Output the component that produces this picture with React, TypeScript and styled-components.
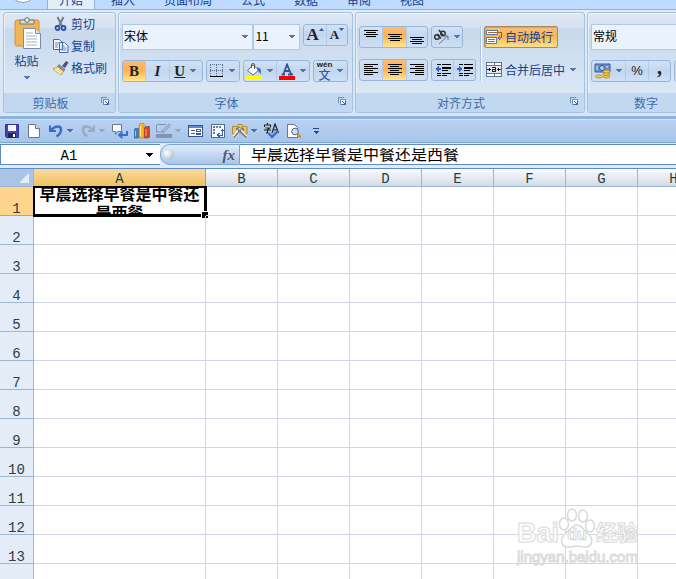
import React from "react";
import styled, { createGlobalStyle, css } from "styled-components";

const uiFont = `"Noto Sans CJK SC", sans-serif`;
const gridFont = `"Liberation Mono", "Noto Sans CJK SC", monospace`;

const Global = createGlobalStyle`
  * { box-sizing: border-box; }
  body { margin: 0; overflow: hidden; background: #fff; font-family: ${uiFont}; font-size: 12px; }
  button, input, select { font: inherit; color: inherit; }
  svg { display: block; flex: none; }
`;

const Page = styled.div`
  display: flex;
  flex-direction: column;
  height: 100vh;
  overflow: hidden;
`;

/* ---------- tabs ---------- */

const TabStrip = styled.nav`
  display: flex;
  align-items: flex-end;
  gap: 19px;
  flex: none;
  height: 10px;
  padding-left: 9px;
  overflow: hidden;
  background: #bfdbff;
  border-bottom: 1px solid #8db2e3;
`;

const OfficeButton = styled.button`
  flex: none;
  width: 28px;
  height: 28px;
  margin: 0 -8px 6px 0;
  padding: 0;
  border: 1px solid #8f9db3;
  border-radius: 50%;
  background: linear-gradient(#dfe6f0, #fff);
`;

const Tab = styled.button<{ $active?: boolean }>`
  flex: none;
  height: 18px;
  padding: 0 5px;
  border: 0;
  background: none;
  color: #15428b;
  line-height: 18px;
  white-space: nowrap;
  ${(p) =>
    p.$active &&
    css`
      padding: 0 11px;
      margin-right: -7px;
      background: #e3eefb;
      box-shadow: -1px 0 #8db2e3, 1px 0 #8db2e3;
    `}
`;

/* ---------- ribbon ---------- */

const Ribbon = styled.section`
  display: flex;
  gap: 2px;
  flex: none;
  height: 106px;
  padding: 2px 3px;
  overflow: hidden;
  background: linear-gradient(#e1ecf8, #d6e6f7);
  border-bottom: 1px solid #c0f4ff;
`;

const Group = styled.section<{ $width: number }>`
  display: flex;
  flex-direction: column;
  flex: none;
  width: ${(p) => p.$width}px;
  border: 1px solid #a4c2e2;
  border-radius: 3px;
  overflow: hidden;
  background: linear-gradient(#dee8f4 0, #d6e2f1 15px, #c8d9ed 16px, #dae7f5 80px);
  box-shadow: inset 1px 1px rgba(255, 255, 255, 0.5);
`;

const GroupBody = styled.div`
  display: flex;
  flex: 1;
  flex-direction: column;
  gap: 10px;
  padding: 11px 4px 0 3px;
`;

const GroupFooter = styled.footer`
  display: flex;
  align-items: center;
  height: 19px;
  background: #c1d8f0;
  color: #3e6aaa;
`;

const GroupTitle = styled.span`
  flex: 1;
  text-align: center;
  line-height: 18px;
`;

const Launcher = styled.button`
  width: 18px;
  height: 18px;
  padding: 2px 5px 6px 3px;
  border: 0;
  background: none;
`;

const Row = styled.div`
  display: flex;
  align-items: flex-start;
  gap: 3px;
`;

const ClipboardBody = styled.div`
  display: flex;
  flex: 1;
  gap: 8px;
  padding: 0 0 0 8px;
`;

const PasteButton = styled.button`
  display: flex;
  flex-direction: column;
  align-items: center;
  justify-content: flex-start;
  width: 31px;
  padding: 4px 0 0;
  border: 0;
  background: none;
  color: #15428b;
  line-height: 18px;
  svg + span { margin: 3px 0 5px -2px; }
  span + svg { margin-left: -2px; }
`;

const CommandList = styled.div`
  display: flex;
  flex-direction: column;
`;

const Command = styled.button<{ $pressed?: boolean }>`
  display: flex;
  align-items: center;
  gap: 2px;
  height: 22px;
  padding: 0 2px 0 1px;
  border: 1px solid transparent;
  border-radius: 2px;
  background: none;
  color: #15428b;
  line-height: 18px;
  white-space: nowrap;
  span + svg { margin-left: 2px; }
  ${(p) =>
    p.$pressed &&
    css`
      padding-right: 4px;
      border-color: #a58b5e;
      background: linear-gradient(#f3be82, #fcb453 45%, #ffdf86);
      box-shadow: inset 1px 1px #c9a673;
    `}
`;

const ButtonSet = styled.div`
  display: flex;
  height: 22px;
  border: 1px solid #98b6dc;
  border-radius: 3px;
  overflow: hidden;
  background: linear-gradient(#d3e2f4, #c2d6f0 50%, #cfe0f5);
`;

const Tool = styled.button<{ $width: number; $pressed?: boolean }>`
  display: flex;
  align-items: center;
  justify-content: center;
  gap: 4px;
  width: ${(p) => p.$width}px;
  padding: 0;
  border: 0;
  background: ${(p) => (p.$pressed ? "linear-gradient(#f8bd7c, #ffb04a 45%, #ffe78f)" : "none")};
  color: #222;
  & + & { border-left: 1px solid #b4cbe8; }
`;

const Glyph = styled.span<{ $size: number; $italic?: boolean; $underline?: boolean; $sans?: boolean; $raised?: boolean }>`
  padding-bottom: ${(p) => (p.$raised ? 8 : 0)}px;
  font-family: ${(p) => (p.$sans ? `"Liberation Sans", sans-serif` : `"Liberation Serif", serif`)};
  font-size: ${(p) => p.$size}px;
  font-weight: ${(p) => (p.$sans ? 400 : 700)};
  font-style: ${(p) => (p.$italic ? "italic" : "normal")};
  text-decoration: ${(p) => (p.$underline ? "underline" : "none")};
  line-height: 20px;
`;

const Combo = styled.label<{ $width: number }>`
  display: flex;
  align-items: center;
  width: ${(p) => p.$width}px;
  height: 26px;
  padding-right: 3px;
  border: 1px solid #b1c9e8;
  background: #eaf2fb;
  & + & { margin-left: -3px; }
`;

const ComboSelect = styled.select`
  appearance: none;
  flex: 1;
  min-width: 0;
  height: 24px;
  padding: 0 1px 3px;
  border: 0;
  background: none;
  color: #000;
  outline: 0;
`;

const AlignBody = styled.div`
  display: flex;
  flex: 1;
  padding: 13px 0 0 3px;
`;

const Stack = styled.div`
  display: flex;
  flex-direction: column;
  align-items: flex-start;
  gap: 11px;
`;

const Separator = styled.div`
  width: 2px;
  height: 55px;
  margin: 0 2px 0 4px;
  background: #fff;
  border-left: 1px solid #a9c4e3;
`;

/* ---------- quick access toolbar ---------- */

const QuickBar = styled.div`
  display: flex;
  align-items: center;
  gap: 6px;
  flex: none;
  height: 27px;
  padding-left: 4px;
  background: linear-gradient(#b8d2f1, #a7c5ea);
  border-top: 3px solid #8fb3dd;
  border-bottom: 1px solid #7ea3cf;
  box-shadow: inset 0 1px #d4e4f8;
`;

const QuickButton = styled.button`
  display: flex;
  align-items: center;
  gap: 2px;
  padding: 0;
  border: 0;
  background: none;
`;

/* ---------- formula bar ---------- */

const FormulaBar = styled.div`
  display: flex;
  flex: none;
  height: 26px;
  background: #e1ebf8;
  border-top: 1px solid #d8e6f7;
  border-bottom: 1px solid #5f8cc0;
  padding-bottom: 3px;
`;

const NameBox = styled.div`
  display: flex;
  flex: none;
  align-items: center;
  width: 160px;
  border: 1px solid #5f8cc0;
  border-right: 0;
  background: #fff;
`;

const NameInput = styled.input`
  flex: 1;
  min-width: 0;
  height: 19px;
  padding: 2px 4px 0 0;
  border: 0;
  outline: 0;
  background: none;
  text-align: center;
  font: 14px ${gridFont};
`;

const PlainButton = styled.button`
  display: flex;
  padding: 0 6px 0 3px;
  border: 0;
  background: none;
`;

const FunctionArea = styled.div`
  display: flex;
  flex: none;
  align-items: center;
  justify-content: space-between;
  width: 80px;
  padding: 0 4px 0 2px;
  border: 1px solid #7ea3cf;
  border-radius: 10px 0 0 10px;
  background: linear-gradient(#e1ecfa, #a9c5e9);
`;

const Knob = styled.span`
  width: 11px;
  height: 11px;
  border-radius: 50%;
  background: radial-gradient(circle at 35% 35%, #fff, #9eadc1);
`;

const FxButton = styled.button`
  padding: 0;
  border: 0;
  background: none;
  color: #4b5a70;
  font: italic 700 15px/18px "Liberation Serif", serif;
`;

const FormulaInput = styled.input`
  flex: 1;
  min-width: 0;
  padding: 3px 11px 0;
  border: solid #5f8cc0;
  border-width: 1px 0;
  outline: 0;
  background: #fff;
  color: #000;
  font: 16px/17px ${gridFont};
`;

/* ---------- sheet ---------- */

const Sheet = styled.main`
  position: relative;
  flex: 1;
  min-height: 0;
  overflow: hidden;
  background: #fff;
`;

const Grid = styled.table`
  table-layout: fixed;
  width: 710px;
  border-collapse: separate;
  border-spacing: 0;
  font-family: ${gridFont};
  font-size: 14px;
  color: #27413e;
`;

const Col = styled.col<{ $width: number }>`
  width: ${(p) => p.$width}px;
`;

const Corner = styled.th`
  height: 18px;
  padding: 0 4px 0 0;
  border: solid #9eb6ce;
  border-width: 0 1px 1px 0;
  background: #a9c4e9;
  svg { margin-left: auto; }
`;

const ColHead = styled.th<{ $selected: boolean }>`
  height: 18px;
  padding: 4px 0 0;
  border: solid ${(p) => (p.$selected ? "#e0913a" : "#9eb6ce")};
  border-width: 0 1px 1px 0;
  background: ${(p) => (p.$selected ? "linear-gradient(#f9d99f, #f1c15f)" : "linear-gradient(#f9fbfd, #d3dbe9)")};
  font-weight: 400;
  line-height: 13px;
`;

const RowHead = styled.th<{ $selected: boolean }>`
  height: 29px;
  padding: 0;
  border: solid ${(p) => (p.$selected ? "#f29536" : "#9eb6ce")};
  border-width: 0 1px 1px 0;
  background: ${(p) => (p.$selected ? "#ffd58d" : "#e4ecf7")};
  font-weight: 400;
  line-height: 12px;
  vertical-align: bottom;
`;

const Cell = styled.td`
  position: relative;
  height: 29px;
  padding: 0;
  border: solid #d0d7e5;
  border-width: 0 1px 1px 0;
`;

const CellText = styled.div`
  height: 28px;
  overflow: hidden;
  color: #000;
  font-size: 16px;
  font-weight: 700;
  line-height: 19px;
  text-align: center;
`;

const Selection = styled.div`
  position: absolute;
  inset: -1px -2px -2px -1px;
  border: 2px solid #000;
  border-right-width: 3px;
  border-bottom-width: 3px;
  &::after {
    content: "";
    position: absolute;
    right: -4px;
    bottom: -4px;
    width: 6px;
    height: 6px;
    background: #000;
    border: solid #fff;
    border-width: 1px 0 0 1px;
  }
`;

const Watermark = styled.div`
  position: absolute;
  right: 38px;
  bottom: 14px;
  display: flex;
  flex-direction: column;
  color: #fff;
  font-family: "Liberation Sans", "Noto Sans CJK SC", sans-serif;
  font-weight: 700;
  -webkit-text-stroke: 1px #d9d9d9;
`;

const WatermarkBrand = styled.div`
  display: flex;
  align-items: flex-end;
  height: 42px;
  font-size: 27px;
  line-height: 30px;
`;

const Paw = styled.span`
  display: grid;
  place-items: end center;
  > * { grid-area: 1 / 1; }
  > span { font-size: 16px; line-height: 22px; padding-bottom: 2px; }
`;

const WatermarkCjk = styled.span`
  margin-left: 1px;
  font-size: 21px;
`;

const WatermarkUrl = styled.div`
  font-size: 15px;
  font-weight: 400;
  line-height: 17px;
`;

/* ---------- icons ---------- */

const Arrow = ({ c = "#5375a8", w = 8 }: { c?: string; w?: number }) => (
  <svg width={w} height="6" viewBox={`0 0 ${w} 6`} shapeRendering="crispEdges">
    <path d={`M${w / 2 - (w > 8 ? 4 : 3)} 1h${w > 8 ? 8 : 6}L${w / 2} 5z`} fill={c} />
  </svg>
);

const LauncherIcon = () => (
  <svg width="10" height="10" viewBox="0 0 10 10" fill="none" shapeRendering="crispEdges">
    <path d="M1.5 7V1.5H7M3.5 3.5h5v5h-5z" stroke="#6d93c3" />
    <path d="M4 4h4v4H4z" fill="#eef5fd" />
    <path d="M5 5l3 3M8 5v3H5" stroke="#41669c" />
  </svg>
);

const PasteIcon = () => (
  <svg width="28" height="32" viewBox="0 0 28 32">
    <rect x="1" y="3" width="24" height="26" rx="2" fill="#efb657" stroke="#ce9141" />
    <path d="M6 3h14v4H6z" fill="#d7dce2" stroke="#777" />
    <circle cx="13" cy="3" r="2.3" fill="#eee" stroke="#666" />
    <path d="M9.500 11.500h12l5 5v15h-17z" fill="#fff" stroke="#7b8ca8" />
    <path d="M21.500 11.500v5h5" fill="#dbe6f4" stroke="#7b8ca8" />
    <path d="M12 16h7M12 19h11M12 22h11M12 25h11M12 28h11" stroke="#a8b0bd" />
  </svg>
);

const CutIcon = () => (
  <svg width="16" height="16" viewBox="0 0 16 16" fill="none">
    <path d="M4.500 1l4.500 9M10.500 1L6 10" stroke="#6f7d93" strokeWidth="2" />
    <circle cx="4.500" cy="12" r="2" stroke="#2452a6" strokeWidth="1.800" />
    <circle cx="10.500" cy="12" r="2" stroke="#2452a6" strokeWidth="1.800" />
  </svg>
);

const CopyIcon = () => (
  <svg width="16" height="16" viewBox="0 0 16 16">
    <path d="M.5 1.500h6l3 3v7h-9zM6.500 4.500h5l3.500 3.500v6.500H6.500z" fill="#f6faff" stroke="#3f68ad" />
    <path d="M2 5h4M2 7h3M2 9h3M8.500 8h3M8.500 10h5M8.500 12h5" stroke="#5b86c9" />
  </svg>
);

const BrushIcon = () => (
  <svg width="16" height="16" viewBox="0 0 16 16">
    <path d="M9 6l4-5 2.500 1.500L12 8z" fill="#4d5088" />
    <path d="M6 4.500l6 5-1.500 2-6-5z" fill="#8d8fa5" stroke="#55597c" strokeWidth=".6" />
    <path d="M4.500 6.500l6 5L8 15 0 9z" fill="#f3dc7f" stroke="#a98d3c" strokeWidth=".7" />
    <path d="M2 9.500l5 4M4 8.500l5 4" stroke="#fff6c9" />
  </svg>
);

const BordersIcon = () => (
  <svg width="14" height="14" viewBox="0 0 14 14" shapeRendering="crispEdges">
    <path d="M.5 1v11M6.500 1v11M12.500 1v11M0 .5h13M0 6.500h13" stroke="#5a6c87" strokeDasharray="1 1" />
    <path d="M0 12.500h13" stroke="#000" />
  </svg>
);

const FillIcon = () => (
  <svg width="16" height="17" viewBox="0 0 16 17">
    <path d="M7 2l6 5-6 5-5.500-4.500z" fill="#fff" stroke="#4b6796" />
    <path d="M5.500 5V2a1.500 1.500 0 013 0v4" fill="none" stroke="#555" />
    <path d="M11 4.500c4 0 4.500 3 3.500 7-1-2-1.500-3.500-3-4z" fill="#3567b8" />
    <path d="M0 13h16v4H0z" fill="#ff0" />
  </svg>
);

const FontColorIcon = () => (
  <svg width="16" height="17" viewBox="0 0 16 17">
    <path d="M2.500 11.500H6M9 11.500h5M4.500 11L8 1.500 12 11M6 8h5" fill="none" stroke="#2f5597" strokeWidth="1.800" />
    <path d="M0 13h16v4H0z" fill="red" />
  </svg>
);

const Phonetic = styled.span`
  display: flex;
  flex-direction: column;
  align-items: center;
  font: 700 8px/8px "Liberation Sans", sans-serif;
  b { color: #2f5da8; font: 500 12px/12px ${uiFont}; }
`;

const LinesIcon = ({ rows }: { rows: [number, number, number][] }) => (
  <svg width="14" height="16" viewBox="0 0 14 16" shapeRendering="crispEdges">
    {rows.map(([x, y, w]) => (
      <path key={y} d={`M${x} ${y}.5h${w}`} stroke="#000" />
    ))}
  </svg>
);

const vAlign = (top: number): [number, number, number][] => [
  [0, top, 14],
  [2, top + 2, 10],
  [0, top + 4, 14],
  [2, top + 6, 10],
];
const hAlign = (shift: number): [number, number, number][] =>
  [2, 4, 6, 8, 10, 12].map((y, i) => (i % 2 ? [shift, y, 9] : [0, y, 14]));

const OrientIcon = () => (
  <svg width="16" height="16" viewBox="0 0 16 16" fill="none" stroke="#333">
    <circle cx="4" cy="8" r="2.300" strokeWidth="1.500" />
    <path d="M4 5l4 4.500M6 1l4.500 6" strokeWidth="1.500" />
    <circle cx="10" cy="4.500" r="2.200" strokeWidth="1.500" />
    <path d="M6 15L14.500 7M11 7h4v4" stroke="#61748f" />
  </svg>
);

const IndentIcon = ({ right }: { right?: boolean }) => (
  <svg width="16" height="14" viewBox="0 0 16 14" shapeRendering="crispEdges">
    <path d="M2 1.500h4M7 1.500h9M7 7.500h6M2 10.500h4M7 10.500h9M2 12.500h4M7 12.500h5" stroke="#000" />
    <path d="M7 5h9" stroke="#000" strokeWidth="2" />
    <path d={right ? "M0 5h2V3l4 3-4 3V7H0z" : "M6 5H4V3L0 6l4 3V7h2z"} fill="#2d66c4" />
  </svg>
);

const WrapIcon = () => (
  <svg width="17" height="16" viewBox="0 0 17 16">
    <path d="M.5 1.500h11v4H.5zM.5 8.500h10v6H.5z" fill="#fff" stroke="#56759f" />
    <path d="M2 3.500h13M2 10.500h7M2 12.500h7" stroke="#9a6b3d" />
    <path d="M15.500 3v6h-3M14 7l-2 2 2 2" fill="none" stroke="#3a67a8" />
  </svg>
);

const MergeIcon = () => (
  <svg width="17" height="16" viewBox="0 0 17 16" shapeRendering="crispEdges">
    <path d="M.5.5h15v14H.5z" fill="#fff" stroke="#5c7698" />
    <path d="M1 3.500h15M1 11.500h15M8.500 1v3M8.500 12v3" stroke="#5c7698" />
    <path d="M1 4h14v7H1z" fill="#e3e8ef" />
    <path d="M1 7.500h4M3.500 6v3M11 7.500h4M12.500 6v3" stroke="#222" />
    <path d="M6 5.500h3.500v4.500M9.500 7.500H6.500v2H10" stroke="#222" fill="none" />
  </svg>
);

const CurrencyIcon = () => (
  <svg width="17" height="16" viewBox="0 0 17 16">
    <path d="M1 1h15v8H1z" fill="#6d93cb" stroke="#39609f" />
    <circle cx="8" cy="5" r="2.500" fill="#b9cfee" stroke="#31558f" />
    <path d="M3 3v4M13 3v2" stroke="#d8e6f9" />
    <g fill="#f7cc45" stroke="#a87816" strokeWidth=".7">
      <ellipse cx="5" cy="13.500" rx="3.500" ry="1.500" />
      <ellipse cx="12.500" cy="13.500" rx="3.500" ry="1.500" />
      <ellipse cx="12.500" cy="11" rx="3.500" ry="1.500" />
      <ellipse cx="12.500" cy="8.500" rx="3.500" ry="1.500" />
    </g>
  </svg>
);

const SaveIcon = () => (
  <svg width="16" height="16" viewBox="0 0 16 16">
    <path d="M1.500 1.500h13v13h-12l-1-1z" fill="#4545b8" stroke="#33338f" />
    <path d="M4 2h8v6H4z" fill="#f2f5ff" />
    <path d="M4 10h8v5H4z" fill="#25254f" />
    <path d="M9 11h2v3H9z" fill="#fff" />
  </svg>
);

const NewIcon = () => (
  <svg width="16" height="16" viewBox="0 0 16 16">
    <path d="M2.500 1.500h7l4 4v9h-11z" fill="#fff" stroke="#6c7788" />
    <path d="M9.500 1.500v4h4" fill="#dce5f1" stroke="#6c7788" />
  </svg>
);

const UndoIcon = ({ redo }: { redo?: boolean }) => (
  <svg width="16" height="16" viewBox="0 0 16 16">
    <g transform={redo ? "matrix(-1 0 0 1 16 0)" : undefined} fill="none" stroke={redo ? "#98aac4" : "#3a6cc8"}>
      <path d="M3 7c5-5 10-4 10-.5 0 3-2 5.500-4.500 7" strokeWidth="2.500" />
      <path d="M2 2.500V8h6" strokeWidth="2" />
    </g>
  </svg>
);

const ReplyIcon = () => (
  <svg width="16" height="16" viewBox="0 0 16 16">
    <path d="M.5 1.500h9v7h-4l-2 3v-3h-3z" fill="#f7fafd" stroke="#69788f" />
    <path d="M15 8v4H8M10.500 9L7 12l3.500 3" fill="none" stroke="#3c70c9" strokeWidth="2" />
  </svg>
);

const ChartIcon = () => (
  <svg width="16" height="16" viewBox="0 0 16 16">
    <path d="M0 7l1-1.500h4V14l-1 1H0z" fill="#3f7fc4" stroke="#265b99" strokeWidth=".6" />
    <path d="M5 2l1-1.500h4V14l-1 1H5z" fill="#f7b91e" stroke="#b97b10" strokeWidth=".6" />
    <path d="M10.500 5l1-1.500h4V14l-1 1h-4z" fill="#e0421e" stroke="#9b2a12" strokeWidth=".6" />
    <path d="M1.500 7.500v6M6.500 3v10M12 6v7" stroke="#fff" opacity=".5" />
  </svg>
);

const PenIcon = () => (
  <svg width="16" height="16" viewBox="0 0 16 16">
    <path d="M1 1.500h9M.5 2v7H5" stroke="#8394ad" fill="none" />
    <path d="M14 1.500L6 9.500" stroke="#8394ad" strokeWidth="2.500" />
    <path d="M13.500 2L7 8.500" stroke="#dbe5f2" />
    <path d="M0 11h16v4H0z" fill="#8296b3" />
  </svg>
);

const FormIcon = () => (
  <svg width="16" height="16" viewBox="0 0 16 16" shapeRendering="crispEdges">
    <path d="M.5 2.500h14v11H.5z" fill="#fff" stroke="#39558a" />
    <path d="M1 3h13v2H1z" fill="#5b8bd5" />
    <path d="M3 7.500h4M3 10.500h4" stroke="#365c9c" />
    <path d="M8.500 6.500h4v2h-4zM8.500 10.500h4v1h-4z" fill="none" stroke="#365c9c" />
  </svg>
);

const PivotIcon = () => (
  <svg width="16" height="16" viewBox="0 0 16 16" shapeRendering="crispEdges">
    <path d="M1.500 1.500h13v13h-13z" fill="#f6f9fd" stroke="#566a88" />
    <path d="M3 3h2v2H3zM6 3h2v2H6zM9 3h2v2H9zM3 6h2v2H3zM3 9h2v2H3z" fill="#67809f" />
    <path d="M12.500 7v5H8M10.500 8.500l2-2 2 2M9.500 10l-2 2 2 2" fill="none" stroke="#3560a5" />
  </svg>
);

const ToolsIcon = () => (
  <svg width="16" height="16" viewBox="0 0 16 16">
    <path d="M.5 3.500H5L6 1.500h4l1 2h4V11H.5z" fill="#efc262" stroke="#b58a35" />
    <path d="M2 14l7-8M6 6l8 8" stroke="#fff" strokeWidth="3.500" />
    <path d="M2 14.500l7-8M6 6.500l8 8" stroke="#6b7a8f" strokeWidth="1.800" />
    <path d="M4 6.500L7.500 4M9 4.500l3 2.500" stroke="#6b7a8f" strokeWidth="1.800" />
  </svg>
);

const SpellIcon = () => (
  <svg width="16" height="16" viewBox="0 0 16 16" fill="none">
    <path d="M.5 4V2h6v2M3.500 0v2M1.500 5h4l-2 2v3H2M0 7h7M8 10l3-9 3.500 9M9 7h5" stroke="#222" strokeWidth="1.200" />
    <path d="M4.500 10l3.500 4 6-6" stroke="#3a6fd6" strokeWidth="2.500" />
  </svg>
);

const PreviewIcon = () => (
  <svg width="16" height="16" viewBox="0 0 16 16">
    <path d="M1.500 1.500h7l3 3v10h-10z" fill="#fff" stroke="#6c7788" />
    <circle cx="9" cy="8.500" r="3.300" fill="#c6e2f3" stroke="#4e637e" />
    <path d="M11.500 11l3 3.500" stroke="#d98c2b" strokeWidth="2.500" />
  </svg>
);

const MoreIcon = () => (
  <svg width="16" height="8" viewBox="0 0 16 8" shapeRendering="crispEdges">
    <path d="M5 1.500h6" stroke="#24477f" />
    <path d="M5 4h6L8 7z" fill="#24477f" />
  </svg>
);

const PawIcon = () => (
  <svg width="36" height="40" viewBox="0 0 36 40" fill="#fff" stroke="#d9d9d9" strokeWidth="1.500">
    <ellipse cx="13" cy="7" rx="4.500" ry="6" />
    <ellipse cx="24" cy="8" rx="4.500" ry="6" />
    <ellipse cx="5" cy="16" rx="4.500" ry="6" />
    <ellipse cx="31" cy="18" rx="4.500" ry="6" />
    <path d="M18 17c5 0 6 5 10 8 8 6 5 14-2 14-4 0-5-1-8-1s-5 1-9 1c-7 0-9-8-2-14 4-3 6-8 11-8z" />
  </svg>
);

const SizeCaret = ({ down }: { down?: boolean }) => (
  <svg width="5" height="14" viewBox="0 0 5 14">
    <path d={down ? "M0 0h5L2.500 3z" : "M0 3h5L2.500 0z"} fill="#315a9b" />
  </svg>
);

const SizeTool = styled(Tool)`
  gap: 0;
`;

/* ---------- composition ---------- */

const RibbonGroup = ({ title, width, children }: { title: string; width: number; children: React.ReactNode }) => (
  <Group $width={width} aria-label={title}>
    {children}
    <GroupFooter>
      <GroupTitle>{title}</GroupTitle>
      <Launcher aria-label={title}>
        <LauncherIcon />
      </Launcher>
    </GroupFooter>
  </Group>
);

const Picker = ({ label, value, width }: { label: string; value: string; width: number }) => (
  <Combo $width={width}>
    <ComboSelect aria-label={label} defaultValue={value}>
      <option>{value}</option>
    </ComboSelect>
    <Arrow />
  </Combo>
);

const tabs = ["插入", "页面布局", "公式", "数据", "审阅", "视图"];
const columns = ["A", "B", "C", "D", "E", "F", "G", "H"];
const rows = [1, 2, 3, 4, 5, 6, 7, 8, 9, 10, 11, 12, 13, null];
const content = "早晨选择早餐是中餐还是西餐";

const quickItems: { label: string; icon: React.ReactNode; arrow?: string }[] = [
  { label: "保存", icon: <SaveIcon /> },
  { label: "新建", icon: <NewIcon /> },
  { label: "撤消", icon: <UndoIcon />, arrow: "#4a6ea5" },
  { label: "恢复", icon: <UndoIcon redo />, arrow: "#9aa5b5" },
  { label: "批注", icon: <ReplyIcon /> },
  { label: "图表", icon: <ChartIcon /> },
  { label: "边框颜色", icon: <PenIcon />, arrow: "#9aa5b5" },
  { label: "记录单", icon: <FormIcon /> },
  { label: "数据透视表", icon: <PivotIcon /> },
  { label: "工具", icon: <ToolsIcon />, arrow: "#4a6ea5" },
  { label: "拼写检查", icon: <SpellIcon /> },
  { label: "打印预览", icon: <PreviewIcon /> },
  { label: "自定义", icon: <MoreIcon /> },
];

export default function App() {
  return (
    <Page>
      <Global />
      <TabStrip>
        <OfficeButton aria-label="Office" />
        <Tab $active>开始</Tab>
        {tabs.map((t) => (
          <Tab key={t}>{t}</Tab>
        ))}
      </TabStrip>

      <Ribbon>
        <RibbonGroup title="剪贴板" width={113}>
          <ClipboardBody>
            <PasteButton>
              <PasteIcon />
              <span>粘贴</span>
              <Arrow />
            </PasteButton>
            <CommandList>
              <Command><CutIcon /><span>剪切</span></Command>
              <Command><CopyIcon /><span>复制</span></Command>
              <Command><BrushIcon /><span>格式刷</span></Command>
            </CommandList>
          </ClipboardBody>
        </RibbonGroup>

        <RibbonGroup title="字体" width={235}>
          <GroupBody>
            <Row>
              <Picker label="字体" value="宋体" width={132} />
              <Picker label="字号" value="11" width={47} />
              <ButtonSet>
                <SizeTool $width={22} aria-label="增大字号"><Glyph $size={17}>A</Glyph><SizeCaret /></SizeTool>
                <SizeTool $width={21} aria-label="减小字号"><Glyph $size={13}>A</Glyph><SizeCaret down /></SizeTool>
              </ButtonSet>
            </Row>
            <Row>
              <ButtonSet>
                <Tool $width={22} $pressed><Glyph $size={15}>B</Glyph></Tool>
                <Tool $width={24}><Glyph $size={15} $italic>I</Glyph></Tool>
                <Tool $width={33}><Glyph $size={15} $underline>U</Glyph><Arrow /></Tool>
              </ButtonSet>
              <ButtonSet>
                <Tool $width={33} aria-label="边框"><BordersIcon /><Arrow /></Tool>
              </ButtonSet>
              <ButtonSet>
                <Tool $width={32} aria-label="填充颜色"><FillIcon /><Arrow /></Tool>
                <Tool $width={33} aria-label="字体颜色"><FontColorIcon /><Arrow /></Tool>
              </ButtonSet>
              <ButtonSet>
                <Tool $width={33}><Phonetic>wén<b>文</b></Phonetic><Arrow /></Tool>
              </ButtonSet>
            </Row>
          </GroupBody>
        </RibbonGroup>

        <RibbonGroup title="对齐方式" width={230}>
          <AlignBody>
            <Stack>
              <Row>
                <ButtonSet>
                  <Tool $width={22} aria-label="顶端对齐"><LinesIcon rows={vAlign(1)} /></Tool>
                  <Tool $width={24} $pressed aria-label="垂直居中"><LinesIcon rows={vAlign(5)} /></Tool>
                  <Tool $width={21} aria-label="底端对齐"><LinesIcon rows={vAlign(8)} /></Tool>
                </ButtonSet>
                <ButtonSet>
                  <Tool $width={30} aria-label="方向"><OrientIcon /><Arrow /></Tool>
                </ButtonSet>
              </Row>
              <Row>
                <ButtonSet>
                  <Tool $width={22} aria-label="左对齐"><LinesIcon rows={hAlign(0)} /></Tool>
                  <Tool $width={24} $pressed aria-label="居中"><LinesIcon rows={hAlign(2)} /></Tool>
                  <Tool $width={21} aria-label="右对齐"><LinesIcon rows={hAlign(5)} /></Tool>
                </ButtonSet>
                <ButtonSet>
                  <Tool $width={21} aria-label="减少缩进量"><IndentIcon /></Tool>
                  <Tool $width={22} aria-label="增加缩进量"><IndentIcon right /></Tool>
                </ButtonSet>
              </Row>
            </Stack>
            <Separator />
            <Stack>
              <Command $pressed><WrapIcon /><span>自动换行</span></Command>
              <Command><MergeIcon /><span>合并后居中</span><Arrow /></Command>
            </Stack>
          </AlignBody>
        </RibbonGroup>

        <RibbonGroup title="数字" width={136}>
          <GroupBody>
            <Row><Picker label="数字格式" value="常规" width={127} /></Row>
            <Row>
              <ButtonSet>
                <Tool $width={33} aria-label="会计数字格式"><CurrencyIcon /><Arrow /></Tool>
                <Tool $width={23}><Glyph $size={13} $sans>%</Glyph></Tool>
                <Tool $width={22}><Glyph $size={20} $raised>,</Glyph></Tool>
              </ButtonSet>
              <ButtonSet>
                <Tool $width={40} aria-label="小数位数" />
              </ButtonSet>
            </Row>
          </GroupBody>
        </RibbonGroup>
      </Ribbon>

      <QuickBar>
        {quickItems.map((q) => (
          <QuickButton key={q.label} aria-label={q.label}>
            {q.icon}
            {q.arrow && <Arrow c={q.arrow} />}
          </QuickButton>
        ))}
      </QuickBar>

      <FormulaBar>
        <NameBox>
          <NameInput aria-label="名称框" defaultValue="A1" />
          <PlainButton aria-label="名称列表"><Arrow c="#000" w={10} /></PlainButton>
        </NameBox>
        <FunctionArea>
          <Knob />
          <FxButton>fx</FxButton>
        </FunctionArea>
        <FormulaInput aria-label="编辑栏" defaultValue={content} />
      </FormulaBar>

      <Sheet>
        <Grid>
          <colgroup>
            <Col $width={34} />
            {columns.map((c) => (
              <Col key={c} $width={c === "A" ? 172 : 72} />
            ))}
          </colgroup>
          <thead>
            <tr>
              <Corner>
                <svg width="10" height="10" viewBox="0 0 10 10">
                  <path d="M10 0v10H0z" fill="#e4eefb" />
                </svg>
              </Corner>
              {columns.map((c) => (
                <ColHead key={c} scope="col" $selected={c === "A"}>{c}</ColHead>
              ))}
            </tr>
          </thead>
          <tbody>
            {rows.map((r, i) => (
              <tr key={i}>
                <RowHead scope="row" $selected={r === 1}>{r}</RowHead>
                {columns.map((c) => (
                  <Cell key={c}>
                    {r === 1 && c === "A" && (
                      <>
                        <CellText>{content}</CellText>
                        <Selection />
                      </>
                    )}
                  </Cell>
                ))}
              </tr>
            ))}
          </tbody>
        </Grid>
        <Watermark>
          <WatermarkBrand>
            <span>Bai</span>
            <Paw><PawIcon /><span>du</span></Paw>
            <WatermarkCjk>经验</WatermarkCjk>
          </WatermarkBrand>
          <WatermarkUrl>jingyan.baidu.com</WatermarkUrl>
        </Watermark>
      </Sheet>
    </Page>
  );
}
